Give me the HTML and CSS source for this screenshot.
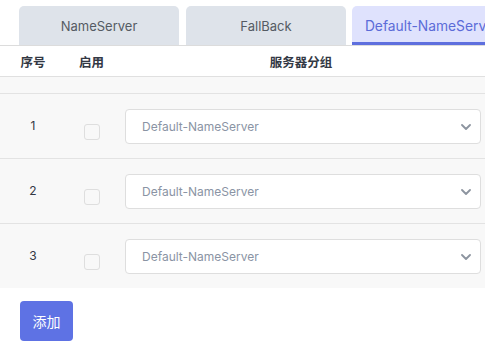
FILE: index.html
```html
<!DOCTYPE html>
<html lang="zh-CN">
<head>
    <meta charset="UTF-8">
    <meta name="viewport" content="width=device-width, initial-scale=1.0">
    <title>服务器分组</title>
    <link rel="stylesheet" href="styles.css">
</head>
<body>
    <div class="tabs">
        <div class="tab">NameServer</div>
        <div class="tab">FallBack</div>
        <div class="tab active">Default-NameServer</div>
    </div>

    <table class="group-table">
        <thead>
            <tr>
                <th class="col-index">序号</th>
                <th class="col-enable">启用</th>
                <th class="col-group">服务器分组</th>
            </tr>
        </thead>
        <tbody>
            <tr class="spacer-row"><td colspan="3"></td></tr>
            <tr>
                <td class="col-index"><span class="num">1</span></td>
                <td class="col-enable"><span class="checkbox"></span></td>
                <td class="col-group">
                    <div class="select">
                        <span>Default-NameServer</span>
                        <svg class="chevron" width="10" height="6" viewBox="0 0 10 6"><path d="M1 1 L5 5 L9 1" fill="none" stroke="#8c949f" stroke-width="1.8" stroke-linecap="round" stroke-linejoin="round"/></svg>
                    </div>
                </td>
            </tr>
            <tr>
                <td class="col-index"><span class="num">2</span></td>
                <td class="col-enable"><span class="checkbox"></span></td>
                <td class="col-group">
                    <div class="select">
                        <span>Default-NameServer</span>
                        <svg class="chevron" width="10" height="6" viewBox="0 0 10 6"><path d="M1 1 L5 5 L9 1" fill="none" stroke="#8c949f" stroke-width="1.8" stroke-linecap="round" stroke-linejoin="round"/></svg>
                    </div>
                </td>
            </tr>
            <tr>
                <td class="col-index"><span class="num">3</span></td>
                <td class="col-enable"><span class="checkbox"></span></td>
                <td class="col-group">
                    <div class="select">
                        <span>Default-NameServer</span>
                        <svg class="chevron" width="10" height="6" viewBox="0 0 10 6"><path d="M1 1 L5 5 L9 1" fill="none" stroke="#8c949f" stroke-width="1.8" stroke-linecap="round" stroke-linejoin="round"/></svg>
                    </div>
                </td>
            </tr>
        </tbody>
    </table>

    <div class="actions">
        <button class="add-btn">添加</button>
    </div>
</body>
</html>
```

FILE: styles.css
```css
body {
    margin: 0;
    background: #ffffff;
    font-family: Inter, "Noto Sans CJK SC", sans-serif;
    color: #333;
    overflow: hidden;
}

.tabs {
    display: flex;
    gap: 7px;
    padding: 6px 0 0 19px;
    border-bottom: 1px solid #dcdcdc;
    overflow: hidden;
    white-space: nowrap;
}

.tab {
    flex: 0 0 160px;
    height: 39px;
    box-sizing: border-box;
    display: flex;
    align-items: center;
    justify-content: center;
    background: #dee3ea;
    border-radius: 5px 5px 0 0;
    font-size: 13px;
    color: #555b63;
}

.tab.active {
    margin-left: -1px;
    background: #dfe2fd;
    color: #5b6bd8;
    border-bottom: 3px solid #5e6fde;
    padding-top: 3px;
    font-size: 13.8px;
}

.group-table {
    width: 100%;
    border-collapse: collapse;
}

.group-table th {
    height: 30px;
    font-size: 12.5px;
    font-weight: 700;
    color: #333844;
    border-bottom: 1px solid #e0e0e0;
    padding: 0;
}

.group-table td {
    background: #f8f8f8;
    border-bottom: 1px solid #e3e3e3;
    height: 64px;
    padding: 0;
    font-size: 12px;
    color: #333844;
}

.group-table tr:last-child td {
    border-bottom: none;
}

.group-table .spacer-row td {
    height: 16px;
}

.col-index {
    width: 66px;
    text-align: center;
}

.num {
    position: relative;
    top: -1px;
}

.col-enable {
    width: 51px;
    text-align: center;
}

.group-table td.col-group {
    padding: 0 4px 0 8px;
}

.checkbox {
    display: inline-block;
    width: 14px;
    height: 14px;
    border: 1px solid #dedede;
    border-radius: 3px;
    background: #f8f8f8;
    margin-top: 12px;
    vertical-align: middle;
}

.select {
    height: 35px;
    box-sizing: border-box;
    display: flex;
    align-items: center;
    justify-content: space-between;
    padding: 0 9px 0 16px;
    background: #fff;
    border: 1px solid #dedede;
    border-radius: 4px;
    font-size: 12px;
    color: #8a94a4;
}

.chevron {
    margin-top: 1px;
}

.actions {
    padding: 13px 20px;
}

.add-btn {
    width: 53px;
    height: 40px;
    border: none;
    border-radius: 4px;
    background: #5e72e4;
    color: #fff;
    font-family: "Noto Sans CJK SC", sans-serif;
    font-size: 14px;
    cursor: pointer;
}
```
